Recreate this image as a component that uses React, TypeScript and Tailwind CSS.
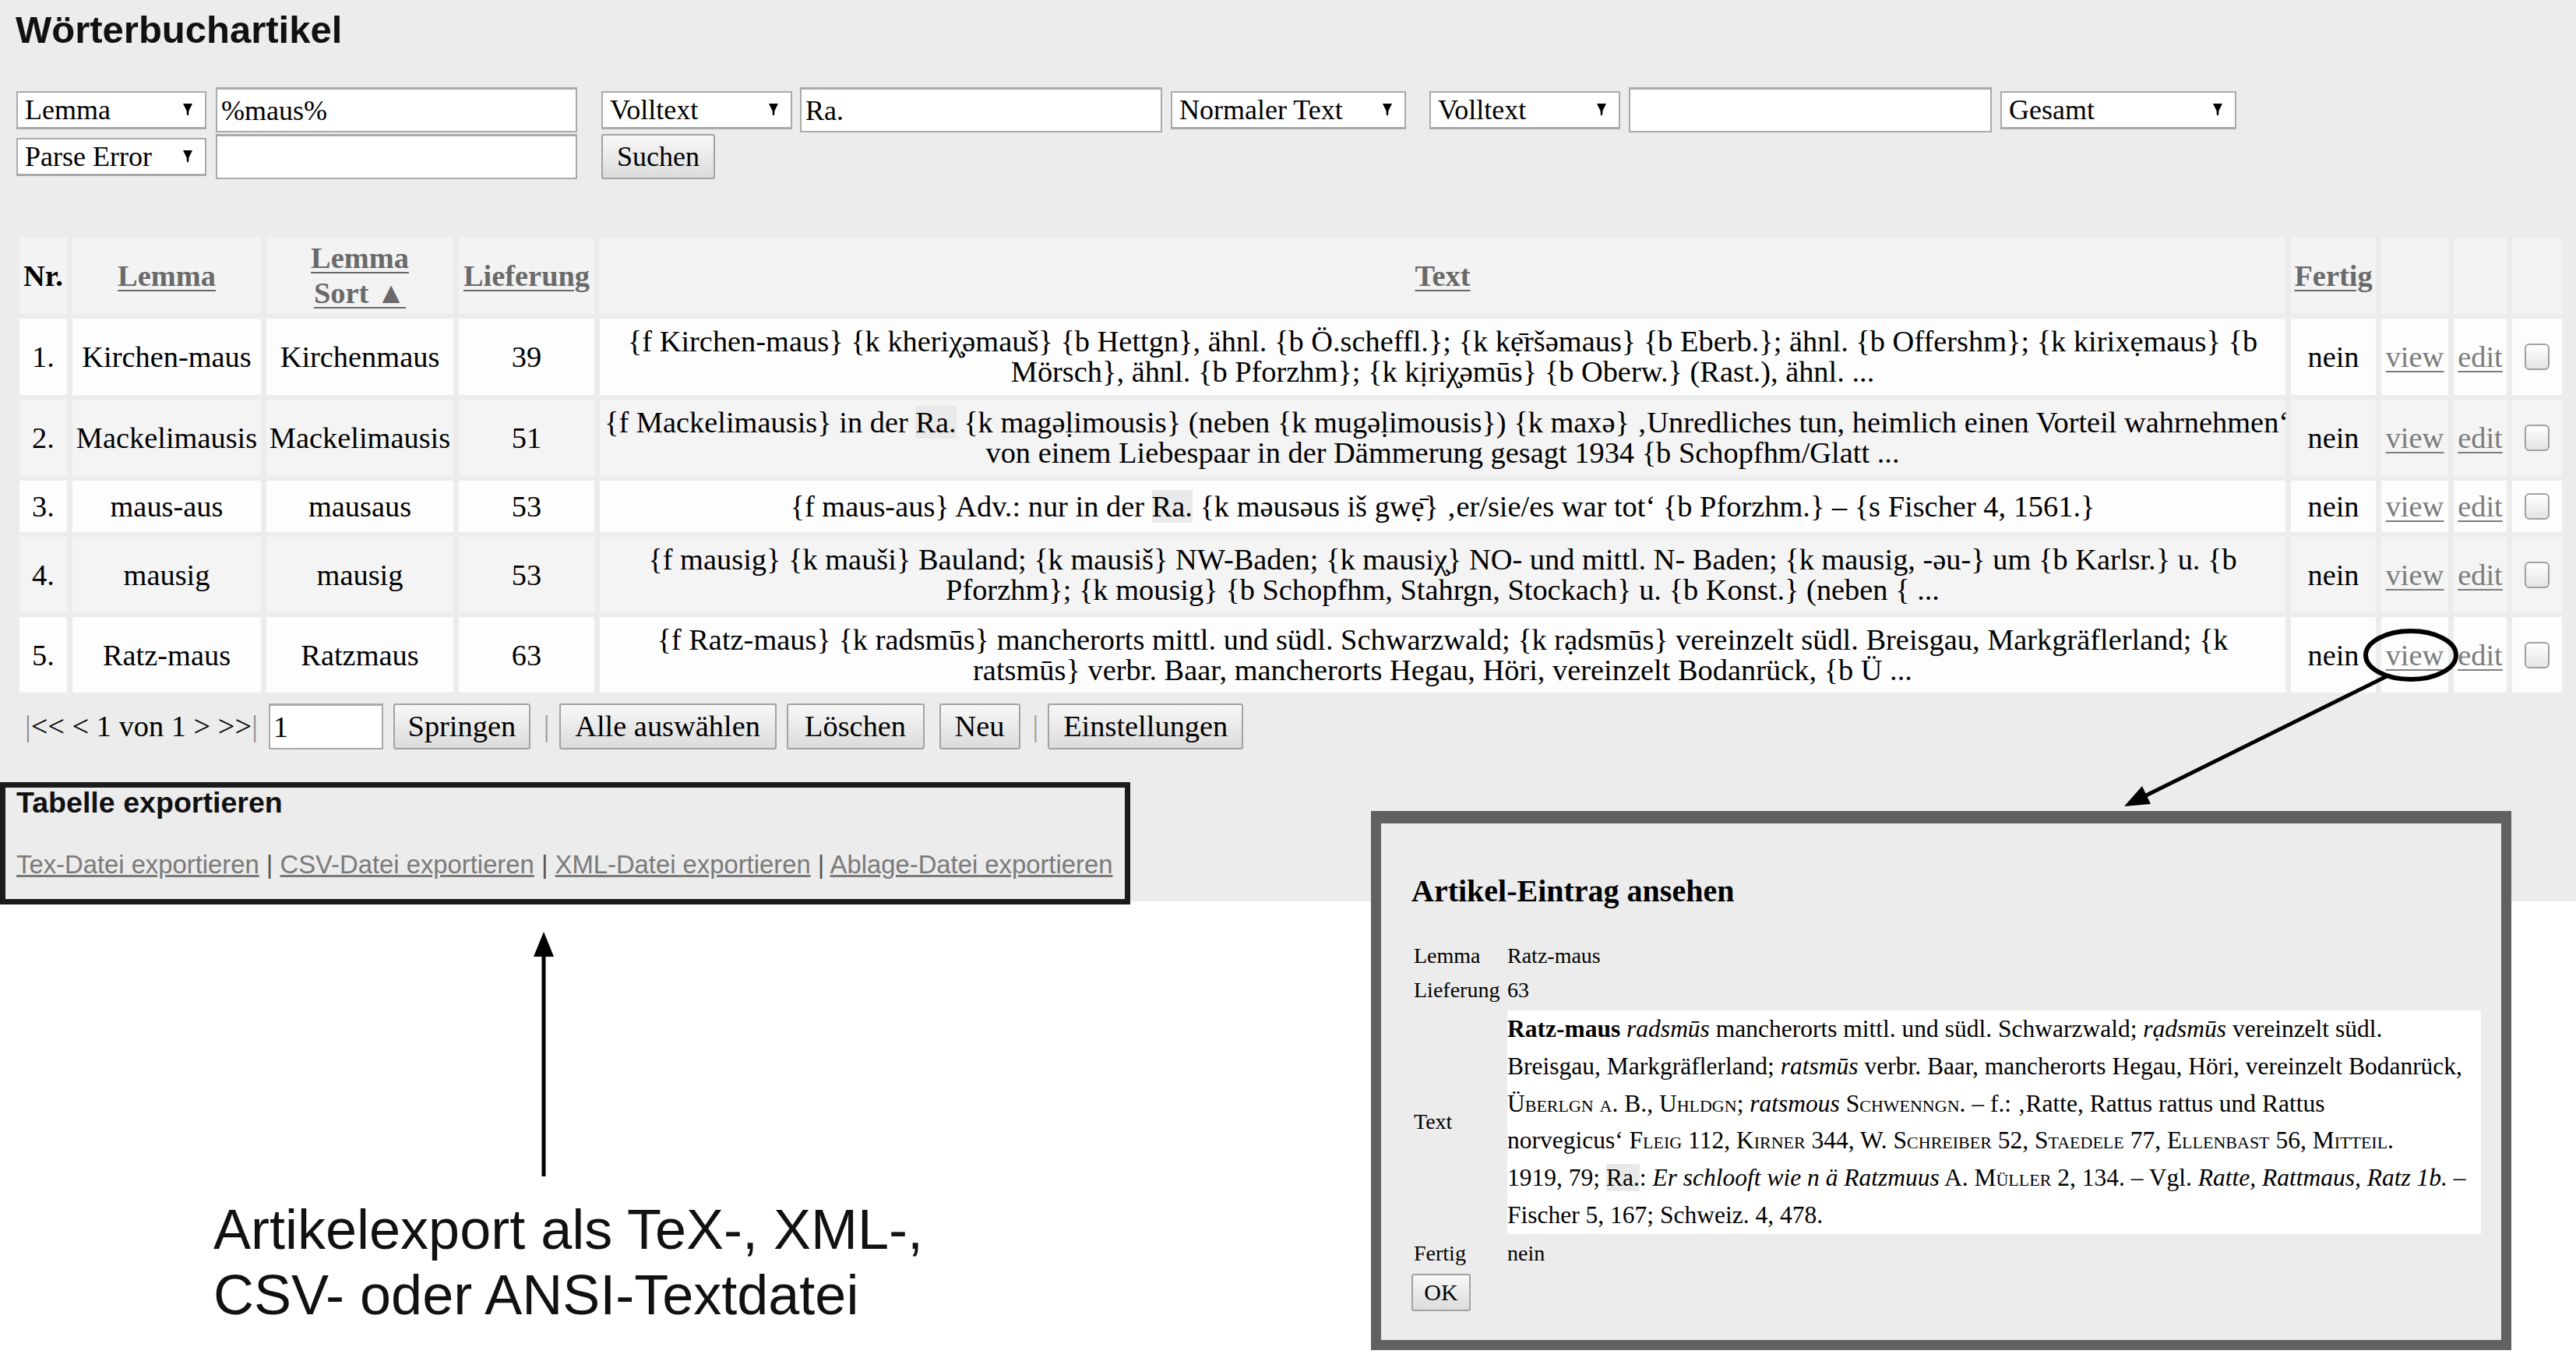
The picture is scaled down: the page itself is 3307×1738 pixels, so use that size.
import React from "react";

const SERIF = "font-['Liberation_Serif','Times_New_Roman',serif]";
const SANS = "font-['Liberation_Sans',Arial,sans-serif]";

function DownArrow() {
  return (
    <svg width="12" height="17" viewBox="0 0 12 17" className="shrink-0">
      <path d="M0 1 H12 L7.5 10 L7 16 H5 L4.5 10 Z" fill="#000" />
    </svg>
  );
}

function Select({ label, className }: { label: string; className: string }) {
  return (
    <div
      className={`flex h-[49px] shrink-0 items-center justify-between border-2 border-b-[3px] border-[#aaaaaa] bg-white pl-[9px] pr-[16px] text-[36px] leading-none text-black ${className}`}
    >
      <span>{label}</span>
      <DownArrow />
    </div>
  );
}

function Input({ value, className }: { value: string; className: string }) {
  return (
    <div
      className={`flex h-[58px] shrink-0 items-center border-2 border-t-[3px] border-[#aaaaaa] bg-white pl-[5px] text-[36px] leading-none text-black ${className}`}
    >
      {value}
    </div>
  );
}

function Btn({ label, className }: { label: string; className: string }) {
  return (
    <div
      className={`flex shrink-0 items-center justify-center rounded-[3px] border-2 border-[#a3a3a3] bg-linear-to-b from-[#f8f8f8] to-[#dcdcdc] leading-none text-black ${className}`}
    >
      {label}
    </div>
  );
}

function Hl({ children }: { children: React.ReactNode }) {
  return <span className="bg-[#e9e9e9]">{children}</span>;
}

function Sc({ children }: { children: React.ReactNode }) {
  return <span className="[font-variant-caps:small-caps]">{children}</span>;
}

function Check() {
  return (
    <div className="mx-auto h-[34px] w-[32px] rounded-[6px] border-2 border-[#a0a0a0] bg-linear-to-b from-white to-[#e4e4e4]" />
  );
}

type Row = {
  nr: string;
  lemma: string;
  sort: string;
  lief: string;
  lines: React.ReactNode[];
  rowClass: string;
  bg: string;
};

const rows: Row[] = [
  {
    nr: "1.",
    lemma: "Kirchen-maus",
    sort: "Kirchenmaus",
    lief: "39",
    rowClass: "h-[98px]",
    bg: "bg-[#fdfdfd]",
    lines: [
      "{f Kirchen-maus} {k kheriχ̧əmauš} {b Hettgn}, ähnl. {b Ö.scheffl.}; {k kẹ̄ršəmaus} {b Eberb.}; ähnl. {b Offershm}; {k kirixẹmaus} {b",
      "Mörsch}, ähnl. {b Pforzhm}; {k kịriχ̧əmūs} {b Oberw.} (Rast.), ähnl. ...",
    ],
  },
  {
    nr: "2.",
    lemma: "Mackelimausis",
    sort: "Mackelimausis",
    lief: "51",
    rowClass: "h-[98px]",
    bg: "bg-[#f4f4f4]",
    lines: [
      <>
        {"{f Mackelimausis} in der "}
        <Hl>Ra.</Hl>
        {" {k magəḷimousis} (neben {k mugəḷimousis}) {k maxə} ‚Unredliches tun, heimlich einen Vorteil wahrnehmen‘"}
      </>,
      "von einem Liebespaar in der Dämmerung gesagt 1934 {b Schopfhm/Glatt ...",
    ],
  },
  {
    nr: "3.",
    lemma: "maus-aus",
    sort: "mausaus",
    lief: "53",
    rowClass: "h-[66px]",
    bg: "bg-[#fdfdfd]",
    lines: [
      <>
        {"{f maus-aus} Adv.: nur in der "}
        <Hl>Ra.</Hl>
        {" {k məusəus iš gwẹ̄} ‚er/sie/es war tot‘ {b Pforzhm.} – {s Fischer 4, 1561.}"}
      </>,
    ],
  },
  {
    nr: "4.",
    lemma: "mausig",
    sort: "mausig",
    lief: "53",
    rowClass: "h-[97px]",
    bg: "bg-[#f4f4f4]",
    lines: [
      "{f mausig} {k mauši} Bauland; {k mausiš} NW-Baden; {k mausiχ̧} NO- und mittl. N- Baden; {k mausig, -əu-} um {b Karlsr.} u. {b",
      "Pforzhm}; {k mousig} {b Schopfhm, Stahrgn, Stockach} u. {b Konst.} (neben { ...",
    ],
  },
  {
    nr: "5.",
    lemma: "Ratz-maus",
    sort: "Ratzmaus",
    lief: "63",
    rowClass: "h-[97px]",
    bg: "bg-[#fdfdfd]",
    lines: [
      "{f Ratz-maus} {k radsmūs} mancherorts mittl. und südl. Schwarzwald; {k rạdsmūs} vereinzelt südl. Breisgau, Markgräflerland; {k",
      "ratsmūs} verbr. Baar, mancherorts Hegau, Höri, vereinzelt Bodanrück, {b Ü ...",
    ],
  },
];

function HeadLink({ children }: { children: React.ReactNode }) {
  return <span className="text-[#6a6a6a] underline decoration-2 underline-offset-[5px]">{children}</span>;
}

export default function App() {
  return (
    <div className={`relative h-[1738px] w-[3307px] overflow-hidden bg-white text-black ${SERIF}`}>
      {/* page */}
      <div className="h-[1157px] bg-[#ececec]">
        <h2 className={`pl-[20px] pt-[11px] text-[49px] font-bold leading-[55px] text-[#111] ${SANS}`}>Wörterbuchartikel</h2>

        {/* filter row 1 */}
        <div className="mt-[46px] flex h-[58px] items-center">
          <Select label="Lemma" className="ml-[21px] w-[244px]" />
          <Input value="%maus%" className="ml-[12px] w-[464px]" />
          <Select label="Volltext" className="ml-[31px] w-[245px]" />
          <Input value="Ra." className="ml-[10px] w-[465px]" />
          <Select label="Normaler Text" className="ml-[11px] w-[302px]" />
          <Select label="Volltext" className="ml-[30px] w-[245px]" />
          <Input value="" className="ml-[11px] w-[466px]" />
          <Select label="Gesamt" className="ml-[11px] w-[303px]" />
        </div>
        {/* filter row 2 */}
        <div className="mt-[2px] flex h-[58px] items-center">
          <Select label="Parse Error" className="ml-[21px] w-[244px]" />
          <Input value="" className="ml-[12px] w-[464px]" />
          <Btn label="Suchen" className="ml-[31px] h-[58px] w-[146px] text-[36px]" />
        </div>

        {/* table */}
        <table className="ml-[18px] mt-[69px] w-[3278px] table-fixed border-separate border-spacing-x-[7px] border-spacing-y-[6px] text-[38.4px] leading-[44px]">
          <colgroup>
            <col className="w-[61px]" />
            <col className="w-[242px]" />
            <col className="w-[240px]" />
            <col className="w-[174px]" />
            <col className="w-[2164px]" />
            <col className="w-[109px]" />
            <col className="w-[86px]" />
            <col className="w-[68px]" />
            <col className="w-[64px]" />
          </colgroup>
          <thead>
            <tr className="h-[98px]">
              <th className="bg-[#f3f3f3] px-0 font-bold">Nr.</th>
              <th className="bg-[#f3f3f3] px-[4px] font-bold">
                <HeadLink>Lemma</HeadLink>
              </th>
              <th className="bg-[#f3f3f3] px-[4px] font-bold leading-[45px]">
                <HeadLink>Lemma</HeadLink>
                <br />
                <HeadLink>Sort ▲</HeadLink>
              </th>
              <th className="bg-[#f3f3f3] px-0 font-bold">
                <HeadLink>Lieferung</HeadLink>
              </th>
              <th className="bg-[#f3f3f3] font-bold">
                <HeadLink>Text</HeadLink>
              </th>
              <th className="bg-[#f3f3f3] px-0 font-bold">
                <HeadLink>Fertig</HeadLink>
              </th>
              <th className="bg-[#f3f3f3]" />
              <th className="bg-[#f3f3f3]" />
              <th className="bg-[#f3f3f3]" />
            </tr>
          </thead>
          <tbody>
            {rows.map((r) => (
              <tr key={r.nr} className={r.rowClass}>
                <td className={`${r.bg} px-0 text-center`}>{r.nr}</td>
                <td className={`${r.bg} px-0 text-center whitespace-nowrap`}>{r.lemma}</td>
                <td className={`${r.bg} px-0 text-center whitespace-nowrap`}>{r.sort}</td>
                <td className={`${r.bg} px-0 text-center`}>{r.lief}</td>
                <td className={`${r.bg} px-[6px] text-center leading-[39px]`}>
                  {r.lines.map((l, i) => (
                    <div key={i} className="whitespace-nowrap">
                      {l}
                    </div>
                  ))}
                </td>
                <td className={`${r.bg} px-0 text-center`}>nein</td>
                <td className={`${r.bg} px-0 text-center`}>
                  <span className="text-[#7c7c7c] underline decoration-2 underline-offset-[5px]">view</span>
                </td>
                <td className={`${r.bg} px-0 text-center`}>
                  <span className="text-[#7c7c7c] underline decoration-2 underline-offset-[5px]">edit</span>
                </td>
                <td className={`${r.bg} px-0`}>
                  <Check />
                </td>
              </tr>
            ))}
          </tbody>
        </table>

        {/* pagination */}
        <div className="mt-[8px] flex h-[59px] items-center text-[38.4px] leading-none">
          <span className="ml-[32px] whitespace-nowrap">
            <span className="text-[#8a8a8a]">|</span>
            {"<< < 1 von 1 > >>"}
            <span className="text-[#8a8a8a]">|</span>
          </span>
          <div className="ml-[14px] flex h-[59px] w-[147px] items-center border-2 border-t-[3px] border-[#aaaaaa] bg-white pl-[4px]">1</div>
          <Btn label="Springen" className="ml-[13px] h-[59px] w-[176px]" />
          <span className="ml-[17px] text-[#9a9a9a]">|</span>
          <Btn label="Alle auswählen" className="ml-[12px] h-[59px] w-[279px]" />
          <Btn label="Löschen" className="ml-[13px] h-[59px] w-[177px]" />
          <Btn label="Neu" className="ml-[19px] h-[59px] w-[104px]" />
          <span className="ml-[16px] text-[#9a9a9a]">|</span>
          <Btn label="Einstellungen" className="ml-[12px] h-[59px] w-[251px]" />
        </div>

        {/* export section, outlined */}
        <div className={`mt-[42px] h-[157px] w-[1451px] border-[7px] border-[#1b1b1b] pl-[14px] ${SANS}`}>
          <div className="text-[37.6px] font-bold leading-[38px] text-[#111]">Tabelle exportieren</div>
          <div className="mt-[42px] whitespace-nowrap text-[32.8px] leading-[38px] text-[#7a7a7a]">
            <span className="underline">Tex-Datei exportieren</span>
            <span className="text-[#555]"> | </span>
            <span className="underline">CSV-Datei exportieren</span>
            <span className="text-[#555]"> | </span>
            <span className="underline">XML-Datei exportieren</span>
            <span className="text-[#555]"> | </span>
            <span className="underline">Ablage-Datei exportieren</span>
          </div>
        </div>
      </div>

      {/* caption */}
      <div className={`pl-[274px] pt-[379px] text-[72px] leading-[84px] text-[#111] ${SANS}`}>
        <div>Artikelexport als TeX-, XML-,</div>
        <div>CSV- oder ANSI-Textdatei</div>
      </div>

      {/* dialog inset */}
      <div className="absolute left-[1760px] top-[1041px] h-[692px] w-[1464px] border-[13px] border-t-[16px] border-[#616161] bg-[#ececec]">
        <div className="pl-[39px] pt-[64px] text-[40px] font-bold leading-[46px]">Artikel-Eintrag ansehen</div>
        <div className="ml-[42px] mt-[38px] grid grid-cols-[120px_1250px] text-[28px]">
          <div className="flex h-[44px] items-center">Lemma</div>
          <div className="flex h-[44px] items-center">Ratz-maus</div>
          <div className="flex h-[44px] items-center">Lieferung</div>
          <div className="flex h-[44px] items-center">63</div>
          <div className="mt-[4px] flex items-center">Text</div>
          <div className="mt-[4px] bg-white text-[31.5px] leading-[47.8px]">
            <div className="whitespace-nowrap">
              <b>Ratz-maus</b> <i>radsmūs</i> mancherorts mittl. und südl. Schwarzwald; <i>rạdsmūs</i> vereinzelt südl.
            </div>
            <div className="whitespace-nowrap">
              Breisgau, Markgräflerland; <i>ratsmūs</i> verbr. Baar, mancherorts Hegau, Höri, vereinzelt Bodanrück,
            </div>
            <div className="whitespace-nowrap">
              <Sc>Überlgn a.</Sc> B., <Sc>Uhldgn</Sc>; <i>ratsmous</i> <Sc>Schwenngn</Sc>. – f.: ‚Ratte, Rattus rattus und Rattus
            </div>
            <div className="whitespace-nowrap">
              norvegicus‘ <Sc>Fleig</Sc> 112, <Sc>Kirner</Sc> 344, W. <Sc>Schreiber</Sc> 52, <Sc>Staedele</Sc> 77,{" "}
              <Sc>Ellenbast</Sc> 56, <Sc>Mitteil</Sc>.
            </div>
            <div className="whitespace-nowrap">
              1919, 79; <Hl>Ra.</Hl>: <i>Er schlooft wie n ä Ratzmuus</i> A. <Sc>Müller</Sc> 2, 134. – Vgl.{" "}
              <i>Ratte, Rattmaus, Ratz 1b.</i> –
            </div>
            <div className="whitespace-nowrap">Fischer 5, 167; Schweiz. 4, 478.</div>
          </div>
          <div className="mt-[3px] flex h-[44px] items-center">Fertig</div>
          <div className="mt-[3px] flex h-[44px] items-center">nein</div>
        </div>
        <Btn label="OK" className="ml-[39px] mt-[4px] h-[48px] w-[76px] text-[30px]" />
      </div>

      {/* annotation marks */}
      <svg className="pointer-events-none absolute left-0 top-0" width="3307" height="1738" viewBox="0 0 3307 1738">
        <ellipse cx="3095" cy="841" rx="58" ry="31" fill="none" stroke="#000" strokeWidth="6" />
        <line x1="3064" y1="868" x2="2755" y2="1021" stroke="#000" strokeWidth="5" />
        <polygon points="2727,1035 2761,1032 2750,1009" fill="#000" />
        <line x1="698" y1="1510" x2="698" y2="1226" stroke="#000" strokeWidth="5" />
        <polygon points="698,1196 685,1228 711,1228" fill="#000" />
      </svg>
    </div>
  );
}
